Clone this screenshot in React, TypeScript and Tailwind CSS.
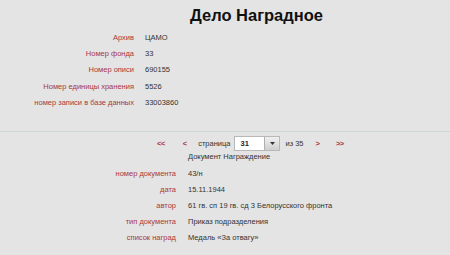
const topRows: [string, string][] = [
  ['Архив', 'ЦАМО'],
  ['Номер фонда', '33'],
  ['Номер описи', '690155'],
  ['Номер единицы хранения', '5526'],
  ['номер записи в базе данных', '33003860'],
];

const docRows: [string, string][] = [
  ['', 'Документ Награждение'],
  ['номер документа', '43/н'],
  ['дата', '15.11.1944'],
  ['автор', '61 гв. сп 19 гв. сд 3 Белорусского фронта'],
  ['тип документа', 'Приказ подразделения'],
  ['список наград', 'Медаль «За отвагу»'],
];

function InfoTable({ rows, cols, rowH }: { rows: [string, string][]; cols: string; rowH: string }) {
  return (
    <div className={`grid ${cols}`}>
      {rows.map(([label, value], i) => (
        <div key={i} className="contents">
          <div className={`${rowH} flex items-center justify-end text-[#a8383c] whitespace-nowrap`}>{label}</div>
          <div className={`${rowH} flex items-center text-[#333] whitespace-nowrap`}>{value}</div>
        </div>
      ))}
    </div>
  );
}

export default function App() {
  return (
    <div
      className="w-[450px] h-[255px] bg-[#e4e4e4] overflow-hidden text-[7.5px]"
      style={{ fontFamily: '"Liberation Sans", Arial, sans-serif' }}
    >
      <h1 className="pl-[190px] pt-[5px] h-[29px] text-[16.5px] font-bold text-[#111] leading-[20px]">
        Дело Наградное
      </h1>

      <InfoTable rows={topRows} cols="grid-cols-[145px_1fr] [&>div>div:first-child]:pr-[11px]" rowH="h-[16.4px]" />

      <div className="mt-[20px] h-px bg-[#cfd6d6]" />

      <div className="flex items-center h-[15px] mt-[4px] pl-[157px] text-[#333]">
        <span className="text-[#a8383c] font-bold tracking-[-0.5px]">&lt;&lt;</span>
        <span className="ml-[18px] text-[#a8383c] font-bold">&lt;</span>
        <span className="ml-[11px]">страница</span>
        <div className="ml-[4px] flex w-[46px] h-[15px] border border-[#b8b8b8] bg-white">
          <span className="flex-1 pl-[5px] flex items-center text-[#223] font-bold">31</span>
          <span className="w-[15px] flex items-center justify-center border-l border-[#b0b0b0] bg-gradient-to-b from-[#f0f0f0] to-[#cfcfcf]">
            <svg width="5" height="3" viewBox="0 0 5 3">
              <path d="M0 0h5L2.5 3z" fill="#333" />
            </svg>
          </span>
        </div>
        <span className="ml-[5px]">из 35</span>
        <span className="ml-[12px] text-[#a8383c] font-bold">&gt;</span>
        <span className="ml-[16px] text-[#a8383c] font-bold tracking-[-0.5px]">&gt;&gt;</span>
      </div>

      <div className="mt-[-2px]">
        <InfoTable rows={docRows} cols="grid-cols-[176px_1fr] [&>div>div:first-child]:pr-0 [&>div>div:last-child]:pl-[12px]" rowH="h-[16.2px]" />
      </div>
    </div>
  );
}
